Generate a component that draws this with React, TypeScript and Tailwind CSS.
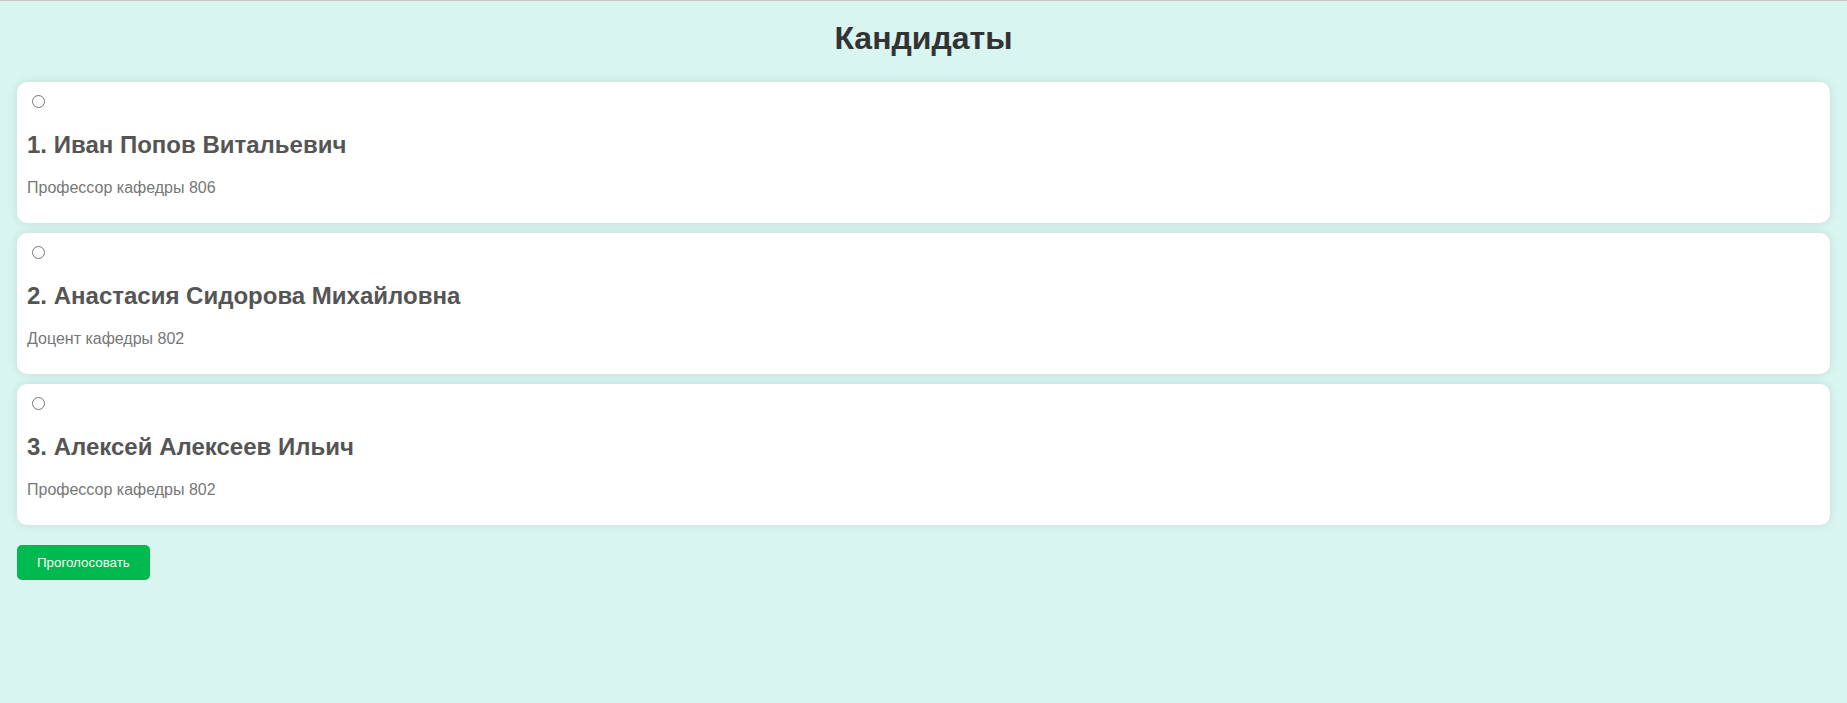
const candidates = [
  { id: 1, name: "Иван Попов Витальевич", role: "Профессор кафедры 806" },
  { id: 2, name: "Анастасия Сидорова Михайловна", role: "Доцент кафедры 802" },
  { id: 3, name: "Алексей Алексеев Ильич", role: "Профессор кафедры 802" },
];

export default function App() {
  return (
    <div className="min-h-screen bg-[#d9f5f0] border-t border-[#c6c6c6] font-['Liberation_Sans',Arial,sans-serif]">
      <h1 className="pt-[19px] text-center text-[32px] leading-[37px] font-bold text-[#333333]">Кандидаты</h1>

      <div className="mt-[25px] px-[17px] flex flex-col gap-[10px]">
        {candidates.map((c) => (
          <label
            key={c.id}
            className="block bg-white rounded-[10px] px-[10px] pt-[10px] pb-[26px] shadow-[0_0_10px_rgba(0,0,0,0.1)]"
          >
            <input type="radio" name="candidate" className="block m-0 mt-[3px] ml-[5px] w-[13px] h-[13px]" />
            <h2 className="mt-[23px] text-[24px] leading-[28px] font-bold text-[#555555]">
              {c.id}. {c.name}
            </h2>
            <p className="mt-[20px] text-[16px] leading-[18px] text-[#777777]">{c.role}</p>
          </label>
        ))}
      </div>

      <div className="px-[17px] mt-[20px]">
        <button className="h-[35px] px-[20px] rounded-[5px] bg-[#00b94f] text-[13.33px] text-[#f4fff4]">
          Проголосовать
        </button>
      </div>
    </div>
  );
}
